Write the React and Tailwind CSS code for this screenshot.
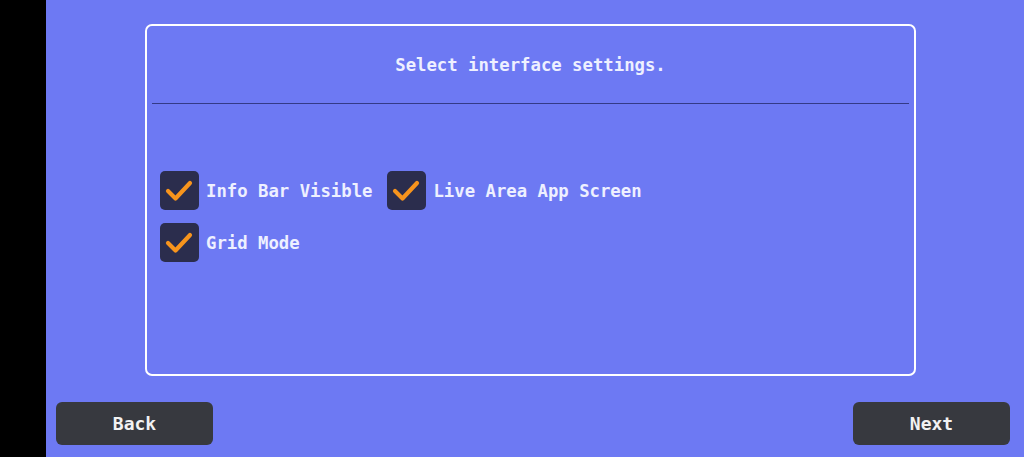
import React from "react";

const font = { fontFamily: '"DejaVu Sans Mono", "Liberation Mono", monospace' };

function Check({ label }) {
  return (
    <label className="flex items-center gap-2 cursor-pointer">
      <span className="w-[39px] h-[39px] rounded-[5px] bg-[#2b2d4d] flex items-center justify-center">
        <svg width="39" height="39" viewBox="0 0 39 39">
          <path
            d="M8 20 L15.5 27.5 L30 12"
            fill="none"
            stroke="#f7941d"
            strokeWidth="4.2"
            strokeLinecap="round"
            strokeLinejoin="round"
          />
        </svg>
      </span>
      <span className="text-[17.3px] font-bold text-[#eef0ff] pt-[3px] -ml-[1px]">{label}</span>
    </label>
  );
}

export default function App() {
  return (
    <div className="flex h-[457px] w-[1024px] bg-[#6d79f3]" style={font}>
      <div className="w-[46px] bg-black" />
      <div className="flex-1 flex flex-col">
        <div className="pt-[24px] pl-[99px] pr-[108px]">
          <div className="h-[352px] border-2 border-white rounded-[7px] flex flex-col px-[5px]">
            <div className="h-[77px] flex items-center justify-center pt-[3px]">
              <h1 className="text-[17.3px] font-bold text-[#eef0ff]">Select interface settings.</h1>
            </div>
            <div className="h-px bg-[#343a86]" />
            <div className="pl-[8px] pt-[67px] flex flex-col gap-[13px]">
              <div className="flex gap-[15px]">
                <Check label="Info Bar Visible" />
                <Check label="Live Area App Screen" />
              </div>
              <Check label="Grid Mode" />
            </div>
          </div>
        </div>
        <div className="mt-auto mb-[12px] flex justify-between pl-[10px] pr-[14px]">
          <button className="w-[157px] h-[43px] rounded-[6px] bg-[#37393f] text-[18px] font-bold text-[#f2f2f2]">
            Back
          </button>
          <button className="w-[157px] h-[43px] rounded-[6px] bg-[#37393f] text-[18px] font-bold text-[#f2f2f2]">
            Next
          </button>
        </div>
      </div>
    </div>
  );
}
